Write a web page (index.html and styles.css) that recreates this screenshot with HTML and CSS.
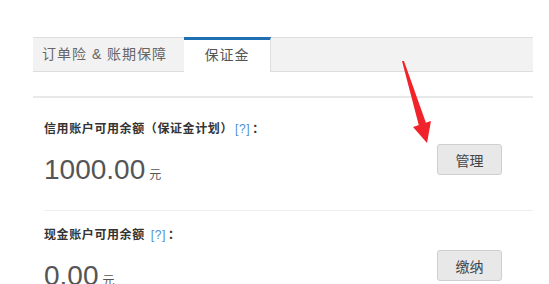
FILE: index.html
```html
<!DOCTYPE html>
<html lang="zh-CN">
<head>
  <meta charset="UTF-8" />
  <title>保证金</title>
  <link rel="stylesheet" href="styles.css">
</head>
<body>

<div class="panel">
  <!-- Tabs -->
  <div class="tabs">
    <div class="tab tab-first">订单险 &amp; 账期保障</div>
    <div class="tab active">保证金</div>
  </div>
  <div class="divider"></div>

  <!-- Accounts -->
  <div class="account first">
    <div class="account-info">
      <div class="label">信用账户可用余额（保证金计划）<span class="help">[?]</span>：</div>
      <div class="amount">1000.00<span class="unit">元</span></div>
    </div>
    <button class="button">管理</button>
  </div>

  <div class="account">
    <div class="account-info">
      <div class="label">现金账户可用余额 <span class="help">[?]</span>：</div>
      <div class="amount">0.00<span class="unit">元</span></div>
    </div>
    <button class="button">缴纳</button>
  </div>
</div>

<!-- Red annotation arrow -->
<svg class="arrow" width="549" height="284" viewBox="0 0 549 284">
  <polygon points="402,61 404,61 426,123 419,126" fill="#f0232a" />
  <polygon points="413,127 431,121 427,143" fill="#f0232a" />
</svg>

</body>
</html>
```

FILE: styles.css
```css
body {
  margin: 0;
  font-family: "Liberation Sans", "Noto Sans CJK SC", sans-serif;
  background: #fff;
  color: #333;
  overflow: hidden;
}
.panel {
  width: 500px;
  margin-left: 33px;
  padding-top: 37px;
}
.tabs {
  display: flex;
  height: 33px;
  background: #f2f2f2;
  border-top: 1px solid #dedede;
  border-bottom: 1px solid #dedede;
}
.tab {
  font-size: 14px;
  line-height: 33px;
  color: #666;
  box-sizing: border-box;
}
.tab-first {
  width: 151px;
  padding-left: 9px;
  letter-spacing: 1px;
}
.tab.active {
  width: 87px;
  text-align: center;
  background: #fff;
  color: #555;
  margin-top: -1px;
  height: 35px;
  border-top: 3px solid #1f6fb2;
  border-right: 1px solid #dedede;
  line-height: 31px;
  letter-spacing: 1px;
}
.divider {
  margin-top: 24px;
  height: 2px;
  background: #e8e8e8;
}
.account {
  display: flex;
  justify-content: space-between;
  align-items: flex-start;
  margin-left: 11px;
  padding: 16px 31px 24px 0;
}
.account.first {
  padding-top: 23px;
  padding-bottom: 19px;
  border-bottom: 1px solid #eeeeee;
}
.label {
  font-size: 12px;
  line-height: 16px;
  font-weight: bold;
  color: #333;
  letter-spacing: 0.6px;
}
.help {
  font-weight: normal;
  color: #4a8fd4;
  padding: 0 2px;
}
.amount {
  margin-top: 17px;
  font-size: 28px;
  line-height: 32px;
  color: #555;
}
.unit {
  font-size: 12px;
  margin-left: 4px;
}
.button {
  width: 65px;
  height: 31px;
  margin-top: 23px;
  font-family: inherit;
  font-size: 14px;
  color: #444;
  background: #e8e8e8;
  border: 1px solid #cfcfcf;
  border-radius: 3px;
  cursor: pointer;
}
.button:hover {
  background: #dedede;
}
.arrow {
  position: absolute;
  left: 0;
  top: 0;
  pointer-events: none;
}
```
